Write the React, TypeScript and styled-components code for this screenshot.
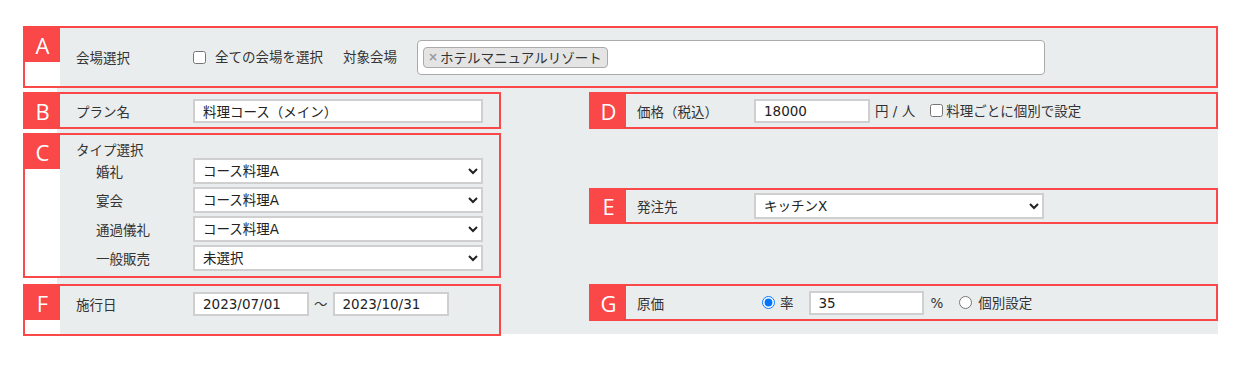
import React from "react";
import styled, { createGlobalStyle } from "styled-components";

const RED = "#fa4747";
const GRAY = "#eaedee";

const GlobalStyle = createGlobalStyle`
  html, body {
    margin: 0;
    background: #ffffff;
  }
  body {
    font-family: "DejaVu Sans", "Noto Sans CJK JP", sans-serif;
    font-size: 13.5px;
    color: #333;
  }
`;

export default function App() {
    return (
        <>
            <GlobalStyle />
            <Page>
                <Panel>
                    <Section $inset>
                        <Badge>A</Badge>
                        <Body $side="left" $pad="16px 0 7px" $h={58}>
                            <Row>
                                <Label>会場選択</Label>
                                <Check type="checkbox" />
                                <Text $gap={9}>全ての会場を選択</Text>
                                <Text $gap={20}>対象会場</Text>
                                <MultiSelect>
                                    <Tag>
                                        <TagClose>×</TagClose>ホテルマニュアルリゾート
                                    </Tag>
                                </MultiSelect>
                            </Row>
                        </Body>
                    </Section>

                    <Grid>
                        <Section $inset>
                            <Badge>B</Badge>
                            <Body $side="left" $center $h={33}>
                                <Row>
                                    <Label>プラン名</Label>
                                    <TextInput $w={290} defaultValue="料理コース（メイン）" />
                                </Row>
                            </Body>
                        </Section>

                        <Section>
                            <Badge>D</Badge>
                            <Body $side="right" $center $h={33}>
                                <Row>
                                    <Label>価格（税込）</Label>
                                    <TextInput $w={116} defaultValue="18000" />
                                    <Text $gap={5}>円 / 人</Text>
                                    <Check type="checkbox" $gap={15} />
                                    <Text $gap={3}>料理ごとに個別で設定</Text>
                                </Row>
                            </Body>
                        </Section>

                        <Section $inset>
                            <Badge>C</Badge>
                            <Body $side="left" $pad="5px 0 5px" $h={141}>
                                <Title>タイプ選択</Title>
                                {[
                                    ["婚礼", "コース料理A"],
                                    ["宴会", "コース料理A"],
                                    ["通過儀礼", "コース料理A"],
                                    ["一般販売", "未選択"],
                                ].map(([name, value]) => (
                                    <SubRow key={name}>
                                        <Label $indent>{name}</Label>
                                        <Select $w={290} defaultValue={value}>
                                            <option>{value}</option>
                                        </Select>
                                    </SubRow>
                                ))}
                            </Body>
                        </Section>

                        <Section $middle>
                            <Badge>E</Badge>
                            <Body $side="right" $center $h={32}>
                                <Row>
                                    <Label>発注先</Label>
                                    <Select $w={290} defaultValue="キッチンX">
                                        <option>キッチンX</option>
                                    </Select>
                                </Row>
                            </Body>
                        </Section>

                        <Section $inset $last>
                            <Badge>F</Badge>
                            <Body $side="left" $pad="5px 0 0" $h={48}>
                                <Row>
                                    <Label>施行日</Label>
                                    <TextInput $w={116} defaultValue="2023/07/01" />
                                    <Text $gap={5}>～</Text>
                                    <TextInput $w={116} $gap={5} defaultValue="2023/10/31" />
                                </Row>
                            </Body>
                        </Section>

                        <Section $last>
                            <Badge>G</Badge>
                            <Body $side="right" $center $h={33}>
                                <Row>
                                    <Label>原価</Label>
                                    <Radio type="radio" name="cost" defaultChecked $gap={8} />
                                    <Text $gap={5}>率</Text>
                                    <TextInput $w={115} $gap={15} defaultValue="35" />
                                    <Text $gap={7}>%</Text>
                                    <Radio type="radio" name="cost" $gap={16} />
                                    <Text $gap={6}>個別設定</Text>
                                </Row>
                            </Body>
                        </Section>
                    </Grid>
                </Panel>
            </Page>
        </>
    );
}

const Page = styled.div`
    min-height: 100vh;
    box-sizing: border-box;
    padding: 26px 0 0 57px;
`;

const Panel = styled.div`
    width: 1161px;
    background: ${GRAY};
    display: flex;
    flex-direction: column;
    gap: 4px;
`;

const Grid = styled.div`
    display: grid;
    grid-template-columns: 444px 629px;
    column-gap: 88px;
    row-gap: 4px;
    align-items: start;
    margin-bottom: -2px;
`;

const Section = styled.section<{ $inset?: boolean; $middle?: boolean; $last?: boolean }>`
    position: relative;
    display: flex;
    border: 2px solid ${RED};
    background: #fff;
    margin-left: ${(p) => (p.$inset ? "-34px" : "0")};
    margin-top: ${(p) => (p.$last ? "2px" : "0")};
    align-self: ${(p) => (p.$middle ? "center" : "auto")};
`;

const Badge = styled.div`
    flex: 0 0 35px;
    max-height: 34px;
    align-self: stretch;
    background: ${RED};
    color: #fff;
    display: flex;
    align-items: center;
    justify-content: center;
    font-family: "Open Sans", "Liberation Sans", sans-serif;
    font-size: 22px;
    line-height: 1;
`;

const Body = styled.div<{ $side: "left" | "right"; $pad?: string; $center?: boolean; $h: number }>`
    flex: 1;
    box-sizing: border-box;
    height: ${(p) => p.$h}px;
    background: ${GRAY};
    padding: ${(p) => p.$pad ?? "0"};
    padding-left: ${(p) => (p.$side === "left" ? "16px" : "11px")};
    display: flex;
    flex-direction: column;
    justify-content: ${(p) => (p.$center ? "center" : "flex-start")};
`;

const Row = styled.div`
    display: flex;
    align-items: center;
    height: 26px;
`;

const SubRow = styled(Row)`
    & + & {
        margin-top: 3px;
    }
`;

const Title = styled.div`
    height: 18px;
    line-height: 18px;
    font-family: "Noto Sans CJK JP", sans-serif;
`;

const Label = styled.span<{ $indent?: boolean }>`
    flex: 0 0 ${(p) => (p.$indent ? "97px" : "117px")};
    padding-left: ${(p) => (p.$indent ? "20px" : "0")};
    font-family: "Noto Sans CJK JP", sans-serif;
`;

const Text = styled.span<{ $gap?: number }>`
    margin-left: ${(p) => p.$gap ?? 0}px;
    white-space: nowrap;
    line-height: 18px;
`;

const TextInput = styled.input<{ $w: number; $gap?: number }>`
    box-sizing: border-box;
    width: ${(p) => p.$w}px;
    height: 24px;
    margin: 0 0 0 ${(p) => p.$gap ?? 0}px;
    padding: 0 8px;
    border: 2px solid #cfcfcf;
    background: #fff;
    font: inherit;
    color: #222;
    outline: none;
`;

const Select = styled.select<{ $w: number }>`
    box-sizing: border-box;
    width: ${(p) => p.$w}px;
    height: 26px;
    margin: 0;
    padding: 0 4px;
    border: 2px solid #cfcfcf;
    border-radius: 0;
    background: #fff;
    font: inherit;
    color: #222;
`;

const Check = styled.input<{ $gap?: number }>`
    width: 13px;
    height: 13px;
    margin: 0 0 0 ${(p) => p.$gap ?? 0}px;
`;

const Radio = styled.input<{ $gap?: number }>`
    width: 13px;
    height: 13px;
    margin: 0 0 0 ${(p) => p.$gap ?? 0}px;
`;

const MultiSelect = styled.div`
    box-sizing: border-box;
    margin-left: 20px;
    width: 628px;
    height: 35px;
    background: #fff;
    border: 1px solid #aaa;
    border-radius: 4px;
    padding: 0 5px;
    display: flex;
    align-items: center;
`;

const Tag = styled.span`
    display: inline-flex;
    align-items: center;
    height: 21px;
    box-sizing: border-box;
    padding: 0 5px 0 4px;
    background: #e4e4e4;
    border: 1px solid #aaa;
    border-radius: 4px;
    color: #333;
    font-family: "Noto Sans CJK JP", sans-serif;
`;

const TagClose = styled.span`
    color: #999;
    font-weight: bold;
    margin-right: 2px;
    font-family: "DejaVu Sans", sans-serif;
    font-size: 12px;
`;
